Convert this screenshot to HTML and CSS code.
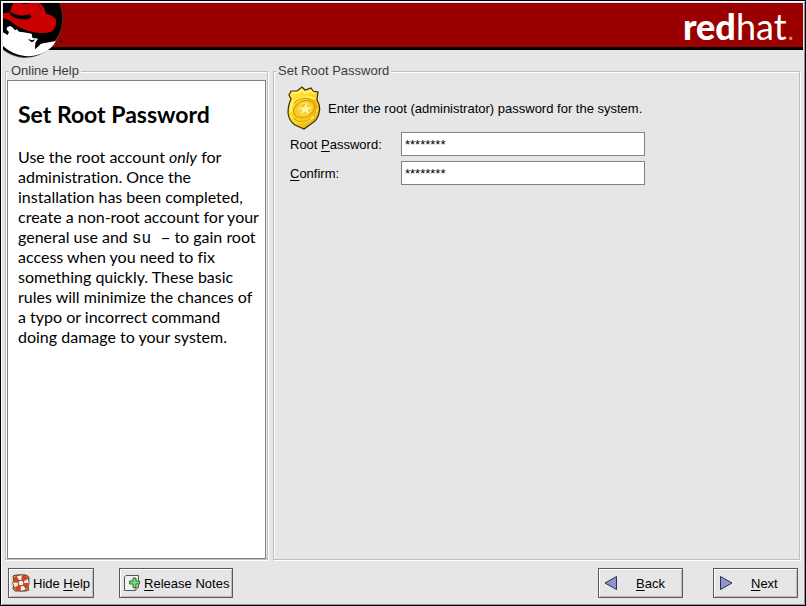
FILE: index.html
```html
<!DOCTYPE html>
<html lang="en">
<head>
  <meta charset="UTF-8">
  <title>Set Root Password</title>
  <link rel="stylesheet" href="styles.css">
</head>
<body>
  <div class="window">
    <header class="banner">
      <svg class="shadowman" width="64" height="58" viewBox="0 0 192 174">
        <path d="M0 0H168Q180 24 179 52Q176 102 144 133Q106 168 60 165Q26 161 0 141Z" fill="#555"/>
        <path d="M0 0H168Q179 24 178 52Q175 100 141 131Q104 164 62 162Q26 159 0 138Z" fill="#000"/>
        <path d="M12 73L22 69L28 73L36 82L42 79L48 86L62 88L86 92L88 104L105 107L97 119L96 139L104 132L114 122L158 114Q150 132 134 142Q104 162 66 159Q28 155 0 129V88L14 96L18 87L11 80Z" fill="#fff"/>
        <path d="M75 108L87 112L97 109L91 116L84 117Z" fill="#000"/>
        <path d="M0 31L21 29Q23 12 32 0H110Q126 12 129 32Q152 36 159 50Q162 74 145 86Q116 94 78 85Q42 73 22 54Q10 48 0 46Z" fill="#cc0000"/>
        <path d="M23 27Q36 36 58 38L79 34L86 41Q78 51 62 49Q34 47 21 35Z" fill="#000"/>
        <path d="M54 0Q62 4 74 2L80 0Z" fill="#000"/>
        <path d="M104 5Q112 11 113 20" fill="none" stroke="#500" stroke-width="3"/>
        <circle cx="175" cy="114" r="5" fill="#500"/>
      </svg>
      <div class="brand"><b>red</b>hat<span class="brand-dot">.</span></div>
    </header>

    <main class="content">
      <fieldset class="frame frame-help">
        <legend>Online Help</legend>
        <div class="help">
          <h1>Set Root Password</h1>
          <p>Use the root account <em>only</em> for administration. Once the installation has been completed, create a non-root account for your general use and <code>su –</code> to gain root access when you need to fix something quickly. These basic rules will minimize the chances of a typo or incorrect command doing damage to your system.</p>
        </div>
      </fieldset>

      <fieldset class="frame frame-form">
        <legend>Set Root Password</legend>
        <div class="intro">
          <svg width="34" height="44" viewBox="0 0 34 44">
            <defs>
              <linearGradient id="gold" x1="0" y1="0" x2="1" y2="1">
                <stop offset="0" stop-color="#ffe94a"/>
                <stop offset=".55" stop-color="#fbd51e"/>
                <stop offset="1" stop-color="#e29a00"/>
              </linearGradient>
            </defs>
            <path d="M4 5L10 5L15 1L18 4L24 2L26 5L31 6L30 14Q34 20 32 27Q31 34 24 38L17 43L8 39Q2 35 1 27Q1 19 4 13L2 9Z" fill="url(#gold)" stroke="#3c2c08" stroke-width="1.2"/>
            <path d="M5 7L11 7L15 4L18 7L24 5L27 8M4 26Q4 18 7 14" fill="none" stroke="#fff68a" stroke-width="1.6"/>
            <path d="M4 31Q12 39 21 35Q28 32 30 23M10 14Q20 8 28 13" fill="none" stroke="#fff27a" stroke-width="1.5"/>
            <path d="M7 17Q16 9 27 15Q31 22 27 30M6 32Q14 39 24 33" fill="none" stroke="#e3a000" stroke-width="1.2"/>
            <ellipse cx="17" cy="23" rx="11" ry="8" transform="rotate(-25 17 23)" fill="#f9cc25" stroke="#dda010" stroke-width="1.2"/>
            <ellipse cx="18" cy="23" rx="6" ry="6" fill="#f5c32a" stroke="#ffec70"/>
            <path d="M20 16L20 21L25 21L21 24L22 28L18 26L14 28L15 24L12 22L17 21Z" fill="#fff4a0"/>
          </svg>
          <span>Enter the root (administrator) password for the system.</span>
        </div>
        <div class="fields">
          <label for="password">Root <u>P</u>assword:</label>
          <input id="password" type="text" value="********">
          <label for="confirm"><u>C</u>onfirm:</label>
          <input id="confirm" type="text" value="********">
        </div>
      </fieldset>
    </main>

    <footer class="actions">
      <button type="button">
        <svg width="18" height="18" viewBox="0 0 18 18">
          <path d="M1 2L4 1L14 1L17 3L16 14L17 16L14 17L3 17L1 15L2 9Z" fill="#d8b34c" stroke="#55451f"/>
          <circle cx="9" cy="9" r="5.5" fill="#eee" stroke="#5c2012" stroke-width="6"/>
          <circle cx="9" cy="9" r="5.5" fill="none" stroke="#f6eee6" stroke-width="4.6"/>
          <circle cx="9" cy="9" r="5.5" fill="none" stroke="#d9401c" stroke-width="4.6" stroke-dasharray="4.8 3.84"/>
        </svg>
        <span>Hide <u>H</u>elp</span>
      </button>
      <button type="button" class="notes">
        <svg width="18" height="18" viewBox="0 0 18 18">
          <path d="M3 1.5H15.5V13L12 16.5H1.5V3Z" fill="#f2f2f2" stroke="#555"/>
          <path d="M12 17L12 13L16 13Z" fill="#bbb" stroke="#555" stroke-width=".7"/>
          <path d="M10 4H13V7H16.5V10H13V13.5H10V10H6.5V7H10Z" fill="#7bd67b" stroke="#237a2c"/>
        </svg>
        <span><u>R</u>elease Notes</span>
      </button>
      <button type="button" class="nav back">
        <svg width="14" height="16" viewBox="0 0 14 16"><path d="M12.5 1.5V14.5L1 8Z" fill="#9094cc" stroke="#2e2e4c"/></svg>
        <span><u>B</u>ack</span>
      </button>
      <button type="button" class="nav">
        <svg width="14" height="16" viewBox="0 0 14 16"><path d="M1.5 1.5V14.5L13 8Z" fill="#9094cc" stroke="#2e2e4c"/></svg>
        <span><u>N</u>ext</span>
      </button>
    </footer>
  </div>
</body>
</html>
```
FILE: styles.css
```css
* { box-sizing: border-box; }
body { margin: 0; background: #000; color: #000; font: 13px/17px "Liberation Sans", Arial, sans-serif; }
u { text-underline-offset: 2px; }

.window { display: flex; flex-direction: column; min-height: 100vh; padding: 2px; border: 1px solid #000; background: #e6e6e6; box-shadow: inset 1px 1px #fff, inset -1px -1px #969696; }

.banner { position: relative; display: flex; justify-content: flex-end; height: 47px; padding-right: 8px; background: #9b0000; border-bottom: 3px solid #000; }
.shadowman { position: absolute; left: 0; top: 0; }
.brand { color: #fff; font: 400 36px/46px Lato, sans-serif; }
.brand b { font-weight: 900; }
.brand-dot { color: #d88; font-weight: 300; }

.content { display: flex; flex: 1; gap: 5px; padding: 12px 3px 0 2px; }
.frame { min-width: 0; margin: 0; padding: 0; border: 1px solid #bebebe; box-shadow: 1px 1px #fff, inset 1px 1px #fff; }
.frame legend { margin-left: 2px; padding: 0 2px; color: #3c3c3c; background: #e6e6e6; line-height: 18px; }
.frame-help { display: flex; flex-direction: column; width: 263px; padding: 0 1px; }
.frame-form { flex: 1; }

.help { height: 100%; padding: 20px 4px 10px 10px; border: 1px solid #828282; background: #fff; font: 16px/20px Lato, "Open Sans", sans-serif; font-variant-ligatures: none; }
.help h1 { margin: 0 0 20px; font-size: 23px; line-height: 26px; }
.help p { margin: 0; }
.help code { font: 16px/16px "Liberation Mono", monospace; }

.intro { display: flex; align-items: center; gap: 7px; margin: 6px 14px 0 13px; }
.fields { display: grid; grid-template-columns: 107px 244px; gap: 5px 4px; align-items: center; margin: 2px 16px 0; }
.fields input { height: 24px; padding: 0 3px; border: 1px solid #828282; background: #fff; font: 13px "Liberation Sans", Arial, sans-serif; }

.actions { display: flex; padding: 8px 5px 5px; }
.actions button { display: flex; align-items: center; gap: 3px; height: 30px; padding: 0 3px; border: 1px solid #5a5a5a; border-radius: 0; background: #e6e6e6; box-shadow: inset 1px 1px #fff, inset -1px -1px #bebebe; color: #000; font: inherit; white-space: nowrap; }
.actions .notes { margin-left: 25px; }
.actions .nav { width: 85px; gap: 18px; padding: 0 5px; }
.actions .back { margin-left: auto; margin-right: 30px; }
```
